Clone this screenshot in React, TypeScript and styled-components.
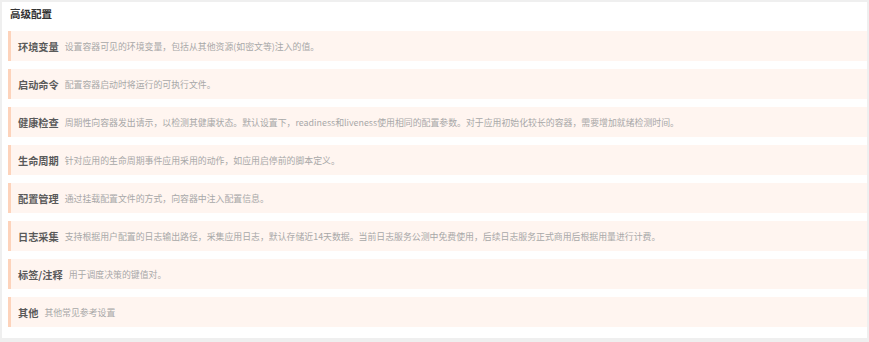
import React from "react"
import styled, { createGlobalStyle } from "styled-components"

const items = [
  { title: "环境变量", desc: "设置容器可见的环境变量，包括从其他资源(如密文等)注入的值。" },
  { title: "启动命令", desc: "配置容器启动时将运行的可执行文件。" },
  {
    title: "健康检查",
    desc: "周期性向容器发出请示，以检测其健康状态。默认设置下，readiness和liveness使用相同的配置参数。对于应用初始化较长的容器，需要增加就绪检测时间。",
  },
  { title: "生命周期", desc: "针对应用的生命周期事件应用采用的动作，如应用启停前的脚本定义。" },
  { title: "配置管理", desc: "通过挂载配置文件的方式，向容器中注入配置信息。" },
  {
    title: "日志采集",
    desc: "支持根据用户配置的日志输出路径，采集应用日志，默认存储近14天数据。当前日志服务公测中免费使用，后续日志服务正式商用后根据用量进行计费。",
  },
  { title: "标签/注释", desc: "用于调度决策的键值对。" },
  { title: "其他", desc: "其他常见参考设置" },
]

const App = () => {
  return (
    <>
      <GlobalStyle />
      <Page>
        <Card>
          <Heading>高级配置</Heading>
          <List>
            {items.map((item) => (
              <Row key={item.title}>
                <RowTitle>{item.title}</RowTitle>
                <RowDesc>{item.desc}</RowDesc>
              </Row>
            ))}
          </List>
        </Card>
      </Page>
    </>
  )
}

export default App

const GlobalStyle = createGlobalStyle`
  html, body {
    margin: 0;
    padding: 0;
    background: #efefef;
  }
  body {
    font-family: "Noto Sans CJK SC", "Noto Sans", sans-serif;
  }
`

const Page = styled.div`
  width: 869px;
  height: 342px;
  padding: 2px 2px 4px 2px;
  box-sizing: border-box;
  background: #efefef;
`

const Card = styled.div`
  background: #fff;
  height: 336px;
  box-sizing: border-box;
  padding: 5px 0 0 6px;
`

const Heading = styled.div`
  font-size: 10.5px;
  font-weight: bold;
  color: #333;
  line-height: 14px;
  padding-left: 2px;
  margin-bottom: 10px;
`

const List = styled.div`
  display: flex;
  flex-direction: column;
  gap: 8px;
`

const Row = styled.div`
  display: flex;
  align-items: center;
  height: 30px;
  background: #fff5f0;
  border-left: 3px solid #fdd3bb;
  padding-left: 7px;
  gap: 6px;
  white-space: nowrap;
`

const RowTitle = styled.span`
  font-size: 10.2px;
  font-weight: bold;
  color: #5a5a5a;
`

const RowDesc = styled.span`
  font-size: 8.9px;
  color: #a8a8a8;
`
